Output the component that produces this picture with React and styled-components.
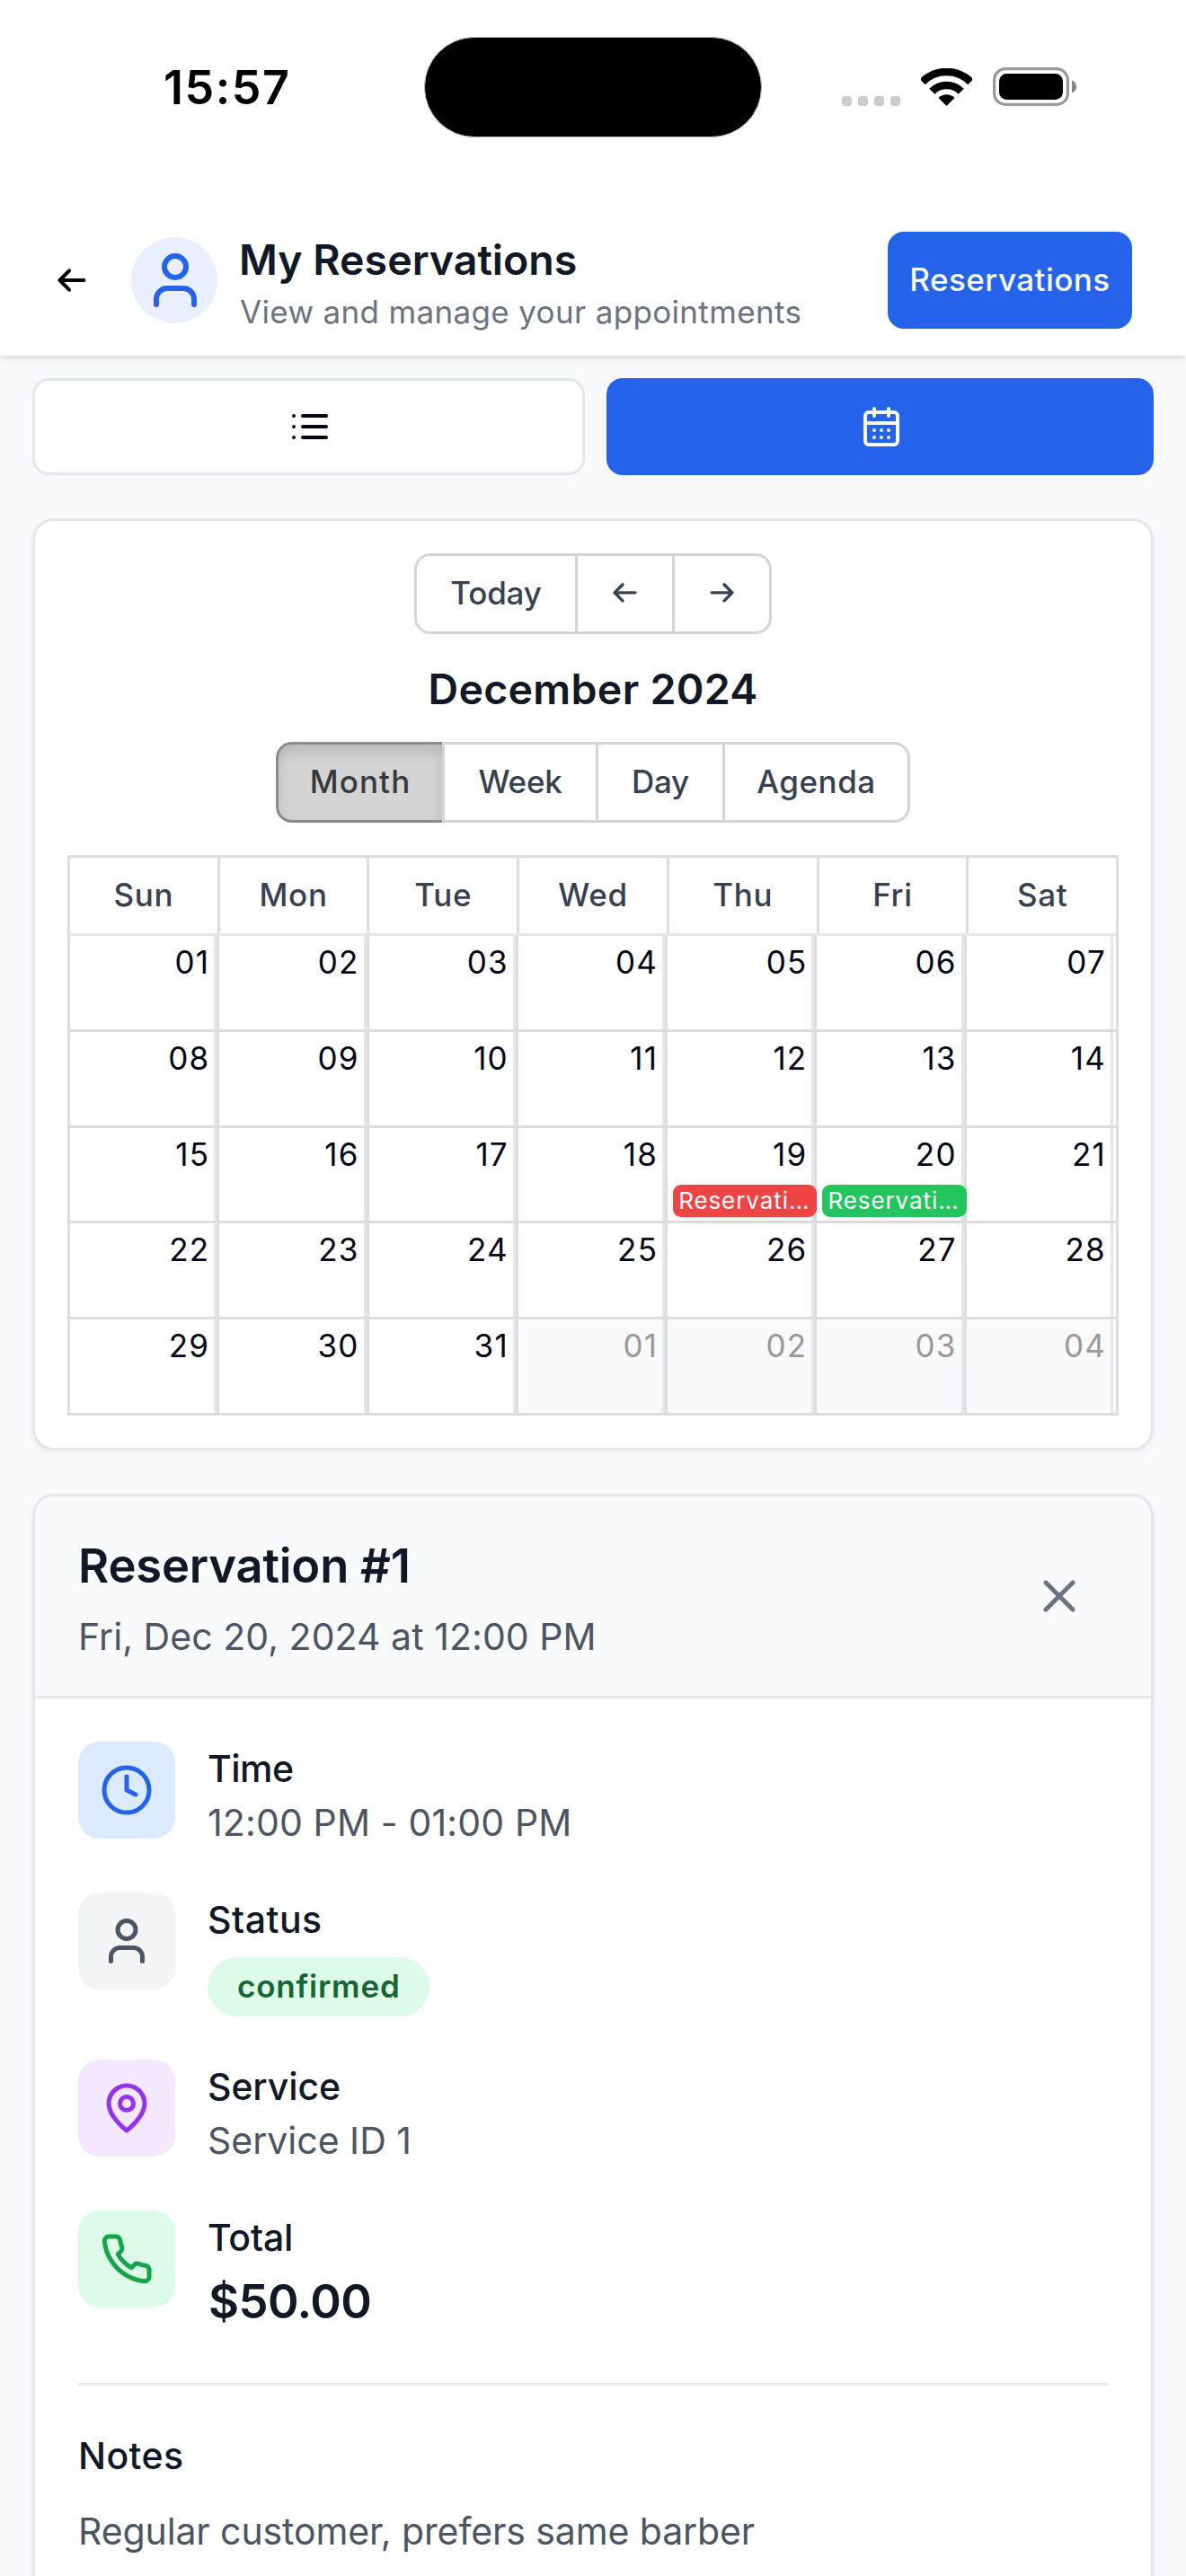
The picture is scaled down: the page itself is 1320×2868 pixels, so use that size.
import React from 'react';
import styled, { createGlobalStyle, ThemeProvider } from 'styled-components';
import { CalendarDays, Clock, User, X } from 'lucide-react';

const theme = {
    primary: '#2563eb',
    page: '#f9fafb',
    surface: '#ffffff',
    heading: '#111827',
    ink: '#020617',
    label: '#374151',
    body: '#4b5563',
    muted: '#6b7280',
    line: '#e5e7eb',
    gridLine: '#dddddd',
    control: '#d1d5db',
};

const GlobalStyle = createGlobalStyle`
    *, *::before, *::after {
        box-sizing: border-box;
    }
    body {
        margin: 0;
        font-family: Inter, 'Liberation Sans', sans-serif;
    }
    button {
        font-family: inherit;
        margin: 0;
    }
    h1, h2, h3, p {
        margin: 0;
    }
    svg {
        display: block;
        flex: none;
    }
`;

const Screen = styled.div`
    width: 1320px;
    height: 2868px;
    overflow: hidden;
    display: flex;
    flex-direction: column;
    background: ${props => props.theme.page};
`;

// status bar
const StatusBar = styled.div`
    position: relative;
    z-index: 1;
    height: 228px;
    flex: none;
    display: grid;
    grid-template-columns: 472px 376px 1fr;
    align-items: start;
    background: ${props => props.theme.surface};
`;
const StatusTime = styled.div`
    padding: 68px 0 0 182px;
    font-size: 52px;
    line-height: 60px;
    font-weight: 600;
    letter-spacing: 1.5px;
    color: #000;
`;
const Island = styled.div`
    height: 112px;
    margin-top: 41px;
    border-radius: 56px;
    border: 1px solid #bbb;
    background: #000;
`;
const StatusIcons = styled.div`
    display: flex;
    align-items: flex-end;
    gap: 23px;
    padding: 75px 0 0 89px;
`;
const Signal = styled.div`
    display: flex;
    gap: 7px;
`;
const SignalDot = styled.span`
    width: 11px;
    height: 11px;
    border-radius: 3.5px;
    background: #ccc;
`;

// header
const Header = styled.header`
    position: relative;
    height: 168px;
    flex: none;
    display: flex;
    align-items: center;
    padding: 0 60px 0 64px;
    background: ${props => props.theme.surface};
    box-shadow: 0 3px 9px rgba(0,0,0,.1), 0 3px 6px -3px rgba(0,0,0,.1);
`;
const Avatar = styled.div`
    width: 96px;
    height: 96px;
    flex: none;
    margin: 0 24px 0 50px;
    padding-left: 1px;
    border-radius: 100%;
    display: flex;
    align-items: center;
    justify-content: center;
    color: ${props => props.theme.primary};
    background: #e9effd;
`;
const HeaderText = styled.div`
    flex: 1;
    padding-top: 12px;
`;
const HeaderTitle = styled.h1`
    font-size: 46.5px;
    line-height: 58px;
    font-weight: 600;
    color: ${props => props.theme.heading};
`;
const HeaderSubtitle = styled.p`
    font-size: 35px;
    line-height: 58px;
    letter-spacing: .34px;
    padding-left: 1px;
    color: ${props => props.theme.muted};
`;
const HeaderButton = styled.button`
    width: 272px;
    height: 108px;
    padding: 0 0 2px;
    border: 0;
    border-radius: 18px;
    font-size: 35px;
    font-weight: 500;
    letter-spacing: .46px;
    color: #f8fafc;
    background: ${props => props.theme.primary};
`;

// list / calendar switch
const ViewSwitch = styled.div`
    display: flex;
    gap: 24px;
    flex: none;
    padding: 25px 36px 48px;
`;
const SwitchButton = styled.button`
    flex: 1 1 0;
    height: 108px;
    padding: 0 0 0 3px;
    border-radius: 18px;
    display: flex;
    align-items: center;
    justify-content: center;
    border: ${props => props.$active ? '0' : '3px solid #e2e8f0'};
    color: ${props => props.$active ? '#f8fafc' : props.theme.ink};
    background: ${props => props.$active ? props.theme.primary : props.theme.surface};
`;

const Card = styled.section`
    flex: none;
    margin: 0 36px;
    border: 3px solid ${props => props.theme.line};
    border-radius: 24px;
    background: ${props => props.theme.surface};
    box-shadow: 0 3px 6px rgba(0,0,0,.05);
`;

// calendar
const CalendarCard = styled(Card)`
    height: 1038px;
    padding: 36px;
    margin-bottom: 48px;
    display: flex;
    flex-direction: column;
    align-items: center;
`;
const ButtonGroup = styled.div`
    display: flex;
    flex: none;
`;
const ToolButton = styled.button`
    width: ${props => props.$width}px;
    height: 90px;
    padding: 0 0 2px;
    display: flex;
    align-items: center;
    justify-content: center;
    border: 3px solid ${props => props.$active ? '#8c8c8c' : props.theme.control};
    font-size: 35px;
    font-weight: 500;
    letter-spacing: ${props => props.$track || 0}px;
    color: ${props => props.$active ? '#373a3c' : props.theme.label};
    background: ${props => props.$active ? '#d4d4d4' : props.theme.surface};
    box-shadow: ${props => props.$active ? 'inset 0 9px 15px rgba(0,0,0,.125)' : 'none'};
    & + & {
        margin-left: -3px;
    }
    &:first-child {
        border-radius: 18px 0 0 18px;
    }
    &:last-child {
        border-radius: 0 18px 18px 0;
    }
`;
const MonthLabel = styled.h2`
    height: 120px;
    padding-top: 1px;
    font-size: 46.5px;
    line-height: 120px;
    font-weight: 600;
    letter-spacing: .3px;
    color: ${props => props.theme.heading};
`;
const MonthView = styled.div`
    width: 1170px;
    height: 624px;
    margin-top: 36px;
    display: flex;
    flex-direction: column;
    border: 3px solid ${props => props.theme.gridLine};
`;
const WeekdayRow = styled.div`
    height: 87px;
    flex: none;
    display: flex;
    border-bottom: 3px solid ${props => props.theme.line};
`;
const Weekday = styled.div`
    flex: 1 0 0;
    font-size: 35px;
    line-height: 82px;
    font-weight: 500;
    letter-spacing: .7px;
    text-align: center;
    color: ${props => props.theme.label};
    & + & {
        border-left: 3px solid ${props => props.theme.gridLine};
    }
`;
const WeekRow = styled.div`
    flex: 1 0 0;
    display: flex;
    padding-right: 3px;
    & + & {
        border-top: 3px solid ${props => props.theme.gridLine};
    }
`;
const DayCell = styled.div`
    flex: 1 0 0;
    min-width: 0;
    border-right: 3px solid ${props => props.theme.line};
    background: ${props => props.$offRange ? '#f8fafc' : 'transparent'};
    color: ${props => props.$offRange ? '#999' : props.theme.ink};
    & + & {
        border-left: 3px solid ${props => props.theme.gridLine};
    }
`;
const DayNumber = styled.div`
    padding-right: 5px;
    font-size: 35px;
    line-height: 58px;
    letter-spacing: 1.2px;
    text-align: right;
`;
const EventChip = styled.div`
    position: relative;
    height: 36px;
    margin: 5px -6px 0 6px;
    padding-left: 6px;
    border-radius: 9px;
    font-size: 26px;
    line-height: 35px;
    letter-spacing: .92px;
    white-space: nowrap;
    color: #fff;
    background: ${props => props.$color};
    box-shadow: 0 3px 6px rgba(0,0,0,.05);
`;

// reservation details
const DetailsCard = styled(Card)`
    height: 1300px;
    overflow: hidden;
`;
const DetailsHeader = styled.div`
    height: 225px;
    padding: 0 72px 0 48px;
    display: flex;
    justify-content: space-between;
    align-items: center;
    border-bottom: 3px solid ${props => props.theme.line};
    background: ${props => props.theme.page};
    color: ${props => props.theme.muted};
`;
const DetailsTitle = styled.h2`
    font-size: 52.5px;
    line-height: 60px;
    font-weight: 600;
    letter-spacing: -.18px;
    margin-bottom: 19px;
    color: ${props => props.theme.heading};
`;
const DetailsDate = styled.p`
    font-size: 41px;
    line-height: 60px;
    letter-spacing: .05px;
    margin-bottom: -11px;
    color: ${props => props.theme.body};
`;
const DetailsBody = styled.div`
    padding: 48px;
`;
const DetailList = styled.div`
    display: flex;
    flex-direction: column;
    gap: 48px;
    padding-bottom: 48px;
    border-bottom: 3px solid ${props => props.theme.line};
`;
const DetailRow = styled.div`
    display: flex;
    align-items: flex-start;
    gap: 36px;
`;
const IconTile = styled.div`
    width: 108px;
    height: 108px;
    flex: none;
    border-radius: 24px;
    display: flex;
    align-items: center;
    justify-content: center;
    color: ${props => props.$color};
    background: ${props => props.$background};
`;
const DetailLabel = styled.h3`
    font-size: 41px;
    line-height: 60px;
    font-weight: 500;
    letter-spacing: ${props => props.$track || 0}px;
    color: ${props => props.theme.heading};
`;
const DetailValue = styled.p`
    font-size: 41px;
    line-height: 60px;
    letter-spacing: ${props => props.$track || 0}px;
    color: ${props => props.theme.body};
`;
const Badge = styled.span`
    display: block;
    width: 247px;
    height: 66px;
    margin-top: 12px;
    padding-left: 33px;
    border-radius: 33px;
    font-size: 35px;
    line-height: 64px;
    font-weight: 600;
    letter-spacing: .8px;
    color: #166534;
    background: #dcfce7;
`;
const Price = styled.p`
    font-size: 52.5px;
    line-height: 83px;
    font-weight: 600;
    letter-spacing: -.6px;
    padding-left: 1px;
    margin-bottom: 1px;
    color: ${props => props.theme.heading};
`;
const Notes = styled.div`
    padding-top: 48px;
    display: flex;
    flex-direction: column;
    gap: 24px;
`;

const WifiIcon = () => (
    <svg width="57" height="42" viewBox="0 0 57 42" fill="none" stroke="#000" strokeWidth="8.6">
        <path d="M1.7 15.2a37.7 37.7 0 0 1 53.6 0" />
        <path d="M12.3 25.7a22.8 22.8 0 0 1 32.4 0" />
        <path d="M28.5 42 19.6 33a12.6 12.6 0 0 1 17.8 0z" fill="#000" stroke="none" />
    </svg>
);

const BatteryIcon = () => (
    <svg width="93" height="43" viewBox="0 0 93 43">
        <rect x="1.6" y="1.6" width="81.8" height="39.8" rx="12.5" fill="none" stroke="#999" strokeWidth="3.2" />
        <rect x="7" y="7" width="71" height="29" rx="8.5" fill="#000" />
        <path d="M88 14.5c3 1 5 3.8 5 7s-2 6-5 7z" fill="#858585" />
    </svg>
);

const ArrowIcon = ({ size, right }) => (
    <svg width={size} height={size * 28 / 32} viewBox="0 0 32 28" fill="none" stroke="currentColor"
        strokeWidth="4" strokeLinecap="round" strokeLinejoin="round">
        {right
            ? <path d="M2.5 14h27M19 3.3 29.5 14 19 24.7" />
            : <path d="M29.5 14h-27M13 3.3 2.5 14 13 24.7" />}
    </svg>
);

const ListIcon = () => (
    <svg width="48" height="48" viewBox="0 0 24 24" fill="none" stroke="currentColor" strokeWidth="2" strokeLinecap="round">
        <path d="M8 6h13M8 12h13M8 18h13M3 6h.01M3 12h.01M3 18h.01" />
    </svg>
);

const PinIcon = () => (
    <svg width="60" height="60" viewBox="0 0 24 24" fill="none" stroke="currentColor" strokeWidth="2" strokeLinecap="round" strokeLinejoin="round">
        <path d="M20 10c0 6-8 12-8 12s-8-6-8-12a8 8 0 0 1 16 0Z" />
        <circle cx="12" cy="10" r="3" />
    </svg>
);

const PhoneIcon = () => (
    <svg width="60" height="60" viewBox="0 0 24 24" fill="none" stroke="currentColor" strokeWidth="2" strokeLinecap="round" strokeLinejoin="round">
        <path d="M22 16.92v3a2 2 0 0 1-2.18 2 19.79 19.79 0 0 1-8.63-3.07 19.5 19.5 0 0 1-6-6 19.79 19.79 0 0 1-3.07-8.67A2 2 0 0 1 4.11 2h3a2 2 0 0 1 2 1.72 12.84 12.84 0 0 0 .7 2.81 2 2 0 0 1-.45 2.11L8.09 9.91a16 16 0 0 0 6 6l1.27-1.27a2 2 0 0 1 2.11-.45 12.84 12.84 0 0 0 2.81.7A2 2 0 0 1 22 16.92z" />
    </svg>
);

const weekdays = ['Sun', 'Mon', 'Tue', 'Wed', 'Thu', 'Fri', 'Sat'];

// December 2024 starts on a Sunday, the last row runs into January
const weeks = [0, 1, 2, 3, 4].map(week =>
    weekdays.map((_, day) => {
        const date = week * 7 + day + 1;
        return { date: date > 31 ? date - 31 : date, offRange: date > 31 };
    })
);

const events = {
    19: { title: 'Reservati…', color: '#ef4444' },
    20: { title: 'Reservati…', color: '#22c55e' },
};

const Calendar = () => (
    <CalendarCard>
        <ButtonGroup>
            <ToolButton $width={182} $track={-0.2}>Today</ToolButton>
            <ToolButton $width={111}><ArrowIcon size={27} /></ToolButton>
            <ToolButton $width={111}><ArrowIcon size={27} right /></ToolButton>
        </ButtonGroup>
        <MonthLabel>December 2024</MonthLabel>
        <ButtonGroup>
            <ToolButton $width={188} $track={1.1} $active>Month</ToolButton>
            <ToolButton $width={174} $track={-0.3}>Week</ToolButton>
            <ToolButton $width={144} $track={-0.2}>Day</ToolButton>
            <ToolButton $width={209} $track={0.5}>Agenda</ToolButton>
        </ButtonGroup>
        <MonthView>
            <WeekdayRow>
                {weekdays.map(name => <Weekday key={name}>{name}</Weekday>)}
            </WeekdayRow>
            {weeks.map((days, i) => (
                <WeekRow key={i}>
                    {days.map(({ date, offRange }) => {
                        const event = !offRange && events[date];
                        return (
                            <DayCell key={date} $offRange={offRange}>
                                <DayNumber>{String(date).padStart(2, '0')}</DayNumber>
                                {event && <EventChip $color={event.color}>{event.title}</EventChip>}
                            </DayCell>
                        );
                    })}
                </WeekRow>
            ))}
        </MonthView>
    </CalendarCard>
);

const Details = () => (
    <DetailsCard>
        <DetailsHeader>
            <div>
                <DetailsTitle>Reservation #1</DetailsTitle>
                <DetailsDate>Fri, Dec 20, 2024 at 12:00 PM</DetailsDate>
            </div>
            <X size={60} />
        </DetailsHeader>
        <DetailsBody>
            <DetailList>
                <DetailRow>
                    <IconTile $color="#2563eb" $background="#dbeafe"><Clock size={60} /></IconTile>
                    <div>
                        <DetailLabel $track={-0.5}>Time</DetailLabel>
                        <DetailValue $track={0.14}>12:00 PM - 01:00 PM</DetailValue>
                    </div>
                </DetailRow>
                <DetailRow>
                    <IconTile $color="#4b5563" $background="#f3f4f6"><User size={60} /></IconTile>
                    <div>
                        <DetailLabel $track={0.5}>Status</DetailLabel>
                        <Badge>confirmed</Badge>
                    </div>
                </DetailRow>
                <DetailRow>
                    <IconTile $color="#9333ea" $background="#f3e8ff"><PinIcon /></IconTile>
                    <div>
                        <DetailLabel $track={-0.1}>Service</DetailLabel>
                        <DetailValue>Service ID 1</DetailValue>
                    </div>
                </DetailRow>
                <DetailRow>
                    <IconTile $color="#16a34a" $background="#dcfce7"><PhoneIcon /></IconTile>
                    <div>
                        <DetailLabel $track={-0.2}>Total</DetailLabel>
                        <Price>$50.00</Price>
                    </div>
                </DetailRow>
            </DetailList>
            <Notes>
                <DetailLabel $track={0.4}>Notes</DetailLabel>
                <DetailValue $track={-0.11}>Regular customer, prefers same barber</DetailValue>
            </Notes>
        </DetailsBody>
    </DetailsCard>
);

const App = () => {
    return (
        <ThemeProvider theme={theme}>
            <GlobalStyle />
            <Screen>
                <StatusBar>
                    <StatusTime>15:57</StatusTime>
                    <Island />
                    <StatusIcons>
                        <Signal>
                            <SignalDot />
                            <SignalDot />
                            <SignalDot />
                            <SignalDot />
                        </Signal>
                        <WifiIcon />
                        <BatteryIcon />
                    </StatusIcons>
                </StatusBar>
                <Header>
                    <ArrowIcon size={32} />
                    <Avatar><User size={72} /></Avatar>
                    <HeaderText>
                        <HeaderTitle>My Reservations</HeaderTitle>
                        <HeaderSubtitle>View and manage your appointments</HeaderSubtitle>
                    </HeaderText>
                    <HeaderButton>Reservations</HeaderButton>
                </Header>
                <ViewSwitch>
                    <SwitchButton><ListIcon /></SwitchButton>
                    <SwitchButton $active><CalendarDays size={48} /></SwitchButton>
                </ViewSwitch>
                <Calendar />
                <Details />
            </Screen>
        </ThemeProvider>
    );
}

export default App;
